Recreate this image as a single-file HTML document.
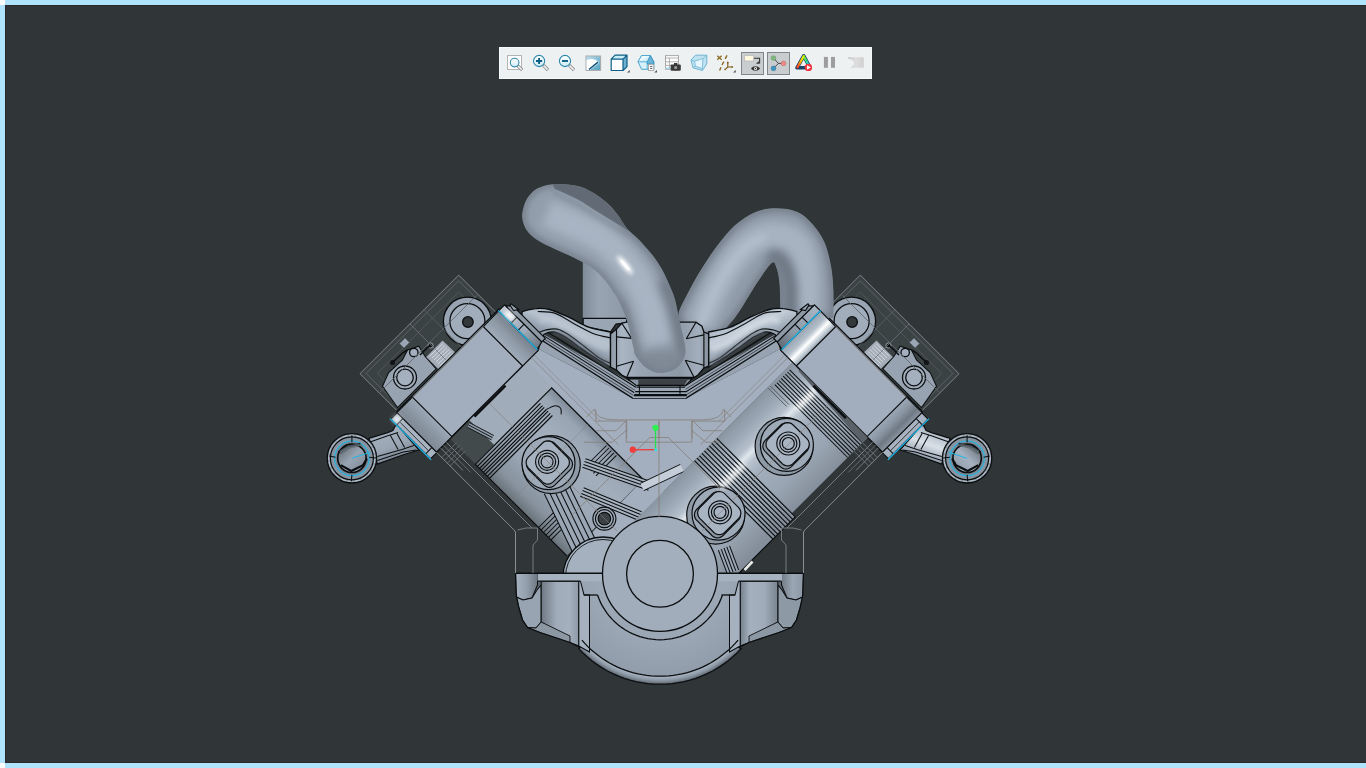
<!DOCTYPE html>
<html lang="en"><head><meta charset="utf-8"><title>Engine assembly - 3D model view</title>
<style>
html,body{margin:0;padding:0;background:#fff;overflow:hidden;font-family:"Liberation Sans",sans-serif}
#app{position:absolute;left:0;top:0;width:1366px;height:768px;background:#fff;overflow:hidden}
#frameT{position:absolute;left:5px;top:0;width:1361px;height:5px;background:#b0e4fe}
#frameB{position:absolute;left:5px;top:763px;width:1361px;height:5px;background:#b0e4fe}
#frameL{position:absolute;left:0;top:5px;width:5px;height:758px;background:#b0e4fe}
#view{position:absolute;left:5px;top:5px;width:1361px;height:758px;background:#303637;box-shadow:inset 1px 1px 0 #272a2a, inset 0 -1px 0 #272a2a}
#scene{position:absolute;left:0;top:0}
#tb{position:absolute;left:499px;top:47px;width:371px;height:30px;background:#eef1f2;border:1px solid #f6f8f9}
.sel{position:absolute;top:52px;width:21px;height:21px;background:#c9cdd0;border:1px solid #80868a}
</style></head><body>
<div id="app">
<div id="frameT"></div><div id="frameB"></div><div id="frameL"></div>
<div id="view"></div>

<svg id="scene" width="1366" height="768" viewBox="0 0 1366 768">
<defs>
<filter id="b06" filterUnits="userSpaceOnUse" x="300" y="150" width="720" height="560"><feGaussianBlur stdDeviation="0.6"/></filter>
<filter id="b2" filterUnits="userSpaceOnUse" x="300" y="150" width="720" height="560"><feGaussianBlur stdDeviation="2"/></filter>
<filter id="b3" filterUnits="userSpaceOnUse" x="300" y="150" width="720" height="560"><feGaussianBlur stdDeviation="3.2"/></filter>
<filter id="b5" filterUnits="userSpaceOnUse" x="300" y="150" width="720" height="560"><feGaussianBlur stdDeviation="5"/></filter>
</defs>
<polygon points="582.8,258.0 582.8,319.0 626.0,319.0 626.0,280.0 600.0,262.0" fill="url(#gBack)"/>
<defs>
<linearGradient id="gBack" x1="582" y1="0" x2="630" y2="0" gradientUnits="userSpaceOnUse">
<stop offset="0" stop-color="#7f8a97"/><stop offset="0.35" stop-color="#98a4b2"/><stop offset="1" stop-color="#8d98a6"/></linearGradient>
</defs>
<defs>
<linearGradient id="gPistL" x1="0" y1="0" x2="1" y2="0" gradientUnits="objectBoundingBox" gradientTransform="rotate(45 .5 .5)">
<stop offset="0" stop-color="#6f7984"/><stop offset="0.25" stop-color="#99a5b3"/><stop offset="0.6" stop-color="#a3afbd"/><stop offset="1" stop-color="#7b8591"/></linearGradient>
</defs>
<polygon points="397.5,411.2 360.0,373.7 458.7,275.1 496.2,312.6" fill="#3b4243" stroke="#7d858a" stroke-width="1"/>
<polygon points="400.7,408.0 366.1,373.4 458.7,280.8 493.3,315.4" fill="none" stroke="#5b6367" stroke-width="1"/>
<polygon points="406.4,402.4 377.4,373.4 458.7,292.1 487.7,321.1" fill="none" stroke="#4f575a" stroke-width="1"/>
<circle cx="467.4" cy="321.2" r="24" fill="#98a4b2" stroke="#0b0e10" stroke-width="1.30"/>
<circle cx="467.4" cy="321.2" r="17.5" fill="#a1adbb" stroke="#0b0e10" stroke-width="1.30"/>
<circle cx="467.9" cy="322.0" r="5.3" fill="#33383b" stroke="#0b0e10" stroke-width="1.30"/>
<polygon points="382.5,386.2 388.7,372.5 402.5,360.0 407.5,350.0 418.8,346.2 425.0,356.2 436.2,368.8 397.5,407.5" fill="#97a3b1" stroke="#0b0e10" stroke-width="1.04"/>
<polygon points="399.5,343.7 405.0,338.0 409.5,342.5 404.0,348.0" fill="#9aa6b4" stroke="#555c62" stroke-width="0.8"/>
<circle cx="405.0" cy="377.5" r="11.5" fill="#a0acba" stroke="#0b0e10" stroke-width="1.30"/>
<circle cx="405.0" cy="377.5" r="8.3" fill="#a4b0be" stroke="#0b0e10" stroke-width="1.30"/>
<circle cx="413.8" cy="352.5" r="4.2" fill="#a4b0be" stroke="#0b0e10" stroke-width="1.30"/>
<circle cx="392.5" cy="362.5" r="2.6" fill="#15181a"/>
<circle cx="430.5" cy="345.5" r="2.6" fill="#15181a" stroke="#9aa6b4" stroke-width="1"/>
<polyline points="392.5,362.5 402.5,353.0 407.5,350.0" fill="none" stroke="#0b0e10" stroke-width="1.56"/>
<polyline points="420.0,355.0 427.5,347.5 430.5,345.5" fill="none" stroke="#0b0e10" stroke-width="1.56"/>
<polygon points="426.2,357.0 442.5,340.5 458.0,355.0 440.5,371.2" fill="#a3acb7" stroke="none"/>
<line x1="430.0" y1="356.0" x2="443.0" y2="343.5" stroke="#d5dbe1" stroke-width="1"/>
<line x1="432.0" y1="358.0" x2="445.0" y2="345.5" stroke="#d5dbe1" stroke-width="1"/>
<line x1="434.0" y1="360.0" x2="447.0" y2="347.5" stroke="#d5dbe1" stroke-width="1"/>
<line x1="436.0" y1="362.0" x2="449.0" y2="349.5" stroke="#d5dbe1" stroke-width="1"/>
<line x1="438.0" y1="364.0" x2="451.0" y2="351.5" stroke="#d5dbe1" stroke-width="1"/>
<line x1="440.0" y1="366.0" x2="453.0" y2="353.5" stroke="#d5dbe1" stroke-width="1"/>
<line x1="442.0" y1="368.0" x2="455.0" y2="355.5" stroke="#d5dbe1" stroke-width="1"/>
<polygon points="437.1,451.5 396.8,411.2 499.0,309.0 539.3,349.3" fill="#a2aebd" stroke="#0b0e10" stroke-width="1.30"/>
<polygon points="921.5,411.2 959.0,373.7 860.3,275.1 822.8,312.6" fill="#3b4243" stroke="#7d858a" stroke-width="1"/>
<polygon points="918.3,408.0 952.9,373.4 860.3,280.8 825.7,315.4" fill="none" stroke="#5b6367" stroke-width="1"/>
<polygon points="912.6,402.4 941.6,373.4 860.3,292.1 831.3,321.1" fill="none" stroke="#4f575a" stroke-width="1"/>
<circle cx="851.6" cy="321.2" r="24" fill="#98a4b2" stroke="#0b0e10" stroke-width="1.30"/>
<circle cx="851.6" cy="321.2" r="17.5" fill="#a1adbb" stroke="#0b0e10" stroke-width="1.30"/>
<circle cx="852.1" cy="322.0" r="5.3" fill="#33383b" stroke="#0b0e10" stroke-width="1.30"/>
<polygon points="936.5,386.2 930.2,372.5 916.5,360.0 911.5,350.0 900.2,346.2 894.0,356.2 882.8,368.8 921.5,407.5" fill="#97a3b1" stroke="#0b0e10" stroke-width="1.04"/>
<polygon points="919.5,343.7 914.0,338.0 909.5,342.5 915.0,348.0" fill="#9aa6b4" stroke="#555c62" stroke-width="0.8"/>
<circle cx="914.0" cy="377.5" r="11.5" fill="#a0acba" stroke="#0b0e10" stroke-width="1.30"/>
<circle cx="914.0" cy="377.5" r="8.3" fill="#a4b0be" stroke="#0b0e10" stroke-width="1.30"/>
<circle cx="905.2" cy="352.5" r="4.2" fill="#a4b0be" stroke="#0b0e10" stroke-width="1.30"/>
<circle cx="926.5" cy="362.5" r="2.6" fill="#15181a"/>
<circle cx="888.5" cy="345.5" r="2.6" fill="#15181a" stroke="#9aa6b4" stroke-width="1"/>
<polyline points="926.5,362.5 916.5,353.0 911.5,350.0" fill="none" stroke="#0b0e10" stroke-width="1.56"/>
<polyline points="899.0,355.0 891.5,347.5 888.5,345.5" fill="none" stroke="#0b0e10" stroke-width="1.56"/>
<polygon points="892.8,357.0 876.5,340.5 861.0,355.0 878.5,371.2" fill="#a3acb7" stroke="none"/>
<line x1="889.0" y1="356.0" x2="876.0" y2="343.5" stroke="#d5dbe1" stroke-width="1"/>
<line x1="887.0" y1="358.0" x2="874.0" y2="345.5" stroke="#d5dbe1" stroke-width="1"/>
<line x1="885.0" y1="360.0" x2="872.0" y2="347.5" stroke="#d5dbe1" stroke-width="1"/>
<line x1="883.0" y1="362.0" x2="870.0" y2="349.5" stroke="#d5dbe1" stroke-width="1"/>
<line x1="881.0" y1="364.0" x2="868.0" y2="351.5" stroke="#d5dbe1" stroke-width="1"/>
<line x1="879.0" y1="366.0" x2="866.0" y2="353.5" stroke="#d5dbe1" stroke-width="1"/>
<line x1="877.0" y1="368.0" x2="864.0" y2="355.5" stroke="#d5dbe1" stroke-width="1"/>
<polygon points="881.9,451.5 922.2,411.2 820.0,309.0 779.7,349.3" fill="#a2aebd" stroke="#0b0e10" stroke-width="1.30"/>
<defs>
<linearGradient id="gPL" gradientUnits="userSpaceOnUse" x1="516.0" y1="504.9" x2="592.3" y2="428.5">
<stop offset="0" stop-color="#687279"/><stop offset="0.12" stop-color="#87929e"/><stop offset="0.35" stop-color="#9ba7b5"/><stop offset="0.7" stop-color="#a2aebc"/><stop offset="0.9" stop-color="#99a5b3"/><stop offset="1" stop-color="#808b98"/></linearGradient>
<linearGradient id="gPR" gradientUnits="userSpaceOnUse" x1="801.6" y1="503.5" x2="726.7" y2="428.5">
<stop offset="0" stop-color="#858f9b"/><stop offset="0.25" stop-color="#99a5b2"/><stop offset="0.5" stop-color="#a2aebc"/><stop offset="0.62" stop-color="#b9c4cf"/><stop offset="0.68" stop-color="#dfe6ec"/><stop offset="0.74" stop-color="#b4bfcb"/><stop offset="0.85" stop-color="#9faab8"/><stop offset="1" stop-color="#8a95a2"/></linearGradient>
</defs>
<polygon points="539.3,349.3 632.6,398.0 686.3,398.0 779.7,349.3 792.8,362.4 663.0,492.2 720.0,573.0 600.0,573.0 576.0,549.0 643.2,479.5 526.2,362.4" fill="#a3afbe"/>
<polygon points="475.7,464.6 449.5,438.4 468.6,419.4 494.7,445.5" fill="#434a4c"/>
<polygon points="494.7,445.5 468.6,419.4 526.6,361.4 552.7,387.5" fill="#a0acba"/>
<polygon points="566.9,555.8 474.9,463.9 551.3,387.5 643.2,479.5" fill="url(#gPL)"/>
<polygon points="709.7,595.4 868.1,437.0 793.1,362.1 634.8,520.5" fill="url(#gPR)"/>
<line x1="475.3" y1="464.3" x2="551.7" y2="387.9" stroke="#0b0e10" stroke-width="1.17"/>
<line x1="477.4" y1="466.4" x2="540.4" y2="403.4" stroke="#0b0e10" stroke-width="1.17"/>
<line x1="479.5" y1="468.5" x2="542.5" y2="405.6" stroke="#0b0e10" stroke-width="1.17"/>
<line x1="481.3" y1="470.3" x2="544.2" y2="407.3" stroke="#0b0e10" stroke-width="1.17"/>
<line x1="483.4" y1="472.4" x2="546.4" y2="409.5" stroke="#0b0e10" stroke-width="1.17"/>
<line x1="485.2" y1="474.2" x2="548.1" y2="411.2" stroke="#0b0e10" stroke-width="1.17"/>
<line x1="487.3" y1="476.3" x2="550.3" y2="413.3" stroke="#0b0e10" stroke-width="1.17"/>
<line x1="489.4" y1="478.4" x2="552.4" y2="415.5" stroke="#0b0e10" stroke-width="1.17"/>
<path d="M546.4,409.5 C547.7,408.9 551.8,406.2 554.1,405.9 C556.5,405.7 559.3,406.6 560.5,408.0 C561.7,409.5 561.1,413.3 561.2,414.4" fill="none" stroke="#0b0e10" stroke-width="1.04"/>
<line x1="566.9" y1="555.8" x2="474.9" y2="463.9" stroke="#0b0e10" stroke-width="1.17"/>
<line x1="643.2" y1="479.5" x2="551.3" y2="387.5" stroke="#0b0e10" stroke-width="1.17"/>
<line x1="538.6" y1="527.5" x2="560.5" y2="505.6" stroke="#0b0e10" stroke-width="1.04"/>
<line x1="541.1" y1="530.0" x2="563.0" y2="508.1" stroke="#0b0e10" stroke-width="1.04"/>
<line x1="543.5" y1="532.5" x2="565.5" y2="510.6" stroke="#0b0e10" stroke-width="1.04"/>
<line x1="546.0" y1="535.0" x2="567.9" y2="513.0" stroke="#0b0e10" stroke-width="1.04"/>
<line x1="548.5" y1="537.4" x2="570.4" y2="515.5" stroke="#0b0e10" stroke-width="1.04"/>
<line x1="551.0" y1="539.9" x2="572.9" y2="518.0" stroke="#0b0e10" stroke-width="1.04"/>
<line x1="586.0" y1="466.0" x2="606.5" y2="445.5" stroke="#0b0e10" stroke-width="1.04"/>
<line x1="588.4" y1="468.5" x2="608.9" y2="448.0" stroke="#0b0e10" stroke-width="1.04"/>
<line x1="590.9" y1="471.0" x2="611.4" y2="450.5" stroke="#0b0e10" stroke-width="1.04"/>
<line x1="593.4" y1="473.4" x2="613.9" y2="452.9" stroke="#0b0e10" stroke-width="1.04"/>
<line x1="595.9" y1="475.9" x2="616.4" y2="455.4" stroke="#0b0e10" stroke-width="1.04"/>
<polygon points="544.3,493.7 572.3,551.7 595.7,540.3 567.7,482.3" fill="#9aa6b4"/>
<line x1="567.7" y1="482.3" x2="595.7" y2="540.3" stroke="#0b0e10" stroke-width="1.04"/>
<line x1="544.3" y1="493.7" x2="572.3" y2="551.7" stroke="#0b0e10" stroke-width="1.04"/>
<line x1="563.0" y1="484.6" x2="591.0" y2="542.6" stroke="#0b0e10" stroke-width="1.04"/>
<line x1="558.3" y1="486.9" x2="586.3" y2="544.9" stroke="#0b0e10" stroke-width="1.04"/>
<line x1="553.7" y1="489.1" x2="581.7" y2="547.1" stroke="#0b0e10" stroke-width="1.04"/>
<line x1="549.0" y1="491.4" x2="577.0" y2="549.4" stroke="#0b0e10" stroke-width="1.04"/>
<polygon points="582.5,467.2 648.5,490.2 651.5,481.8 585.5,458.8" fill="#a7b3c1"/>
<line x1="585.5" y1="458.8" x2="651.5" y2="481.8" stroke="#0b0e10" stroke-width="1.04"/>
<line x1="582.5" y1="467.2" x2="648.5" y2="490.2" stroke="#0b0e10" stroke-width="1.04"/>
<line x1="584.5" y1="461.6" x2="650.5" y2="484.6" stroke="#0b0e10" stroke-width="1.04"/>
<line x1="583.5" y1="464.4" x2="649.5" y2="487.4" stroke="#0b0e10" stroke-width="1.04"/>
<polygon points="580.3,496.2 638.3,520.2 641.7,511.8 583.7,487.8" fill="#a7b3c1"/>
<line x1="583.7" y1="487.8" x2="641.7" y2="511.8" stroke="#0b0e10" stroke-width="1.04"/>
<line x1="580.3" y1="496.2" x2="638.3" y2="520.2" stroke="#0b0e10" stroke-width="1.04"/>
<line x1="582.6" y1="490.6" x2="640.6" y2="514.6" stroke="#0b0e10" stroke-width="1.04"/>
<line x1="581.4" y1="493.4" x2="639.4" y2="517.4" stroke="#0b0e10" stroke-width="1.04"/>
<circle cx="604.4" cy="518.7" r="11.5" fill="#9da9b7" stroke="#0b0e10" stroke-width="1.17"/>
<circle cx="604.4" cy="518.7" r="9" fill="#a3afbd" stroke="#0b0e10" stroke-width="1.17"/>
<circle cx="604.4" cy="518.7" r="6.3" fill="#3a4043" stroke="#0b0e10" stroke-width="1.17"/>
<polygon points="643.7,490.6 683.7,471.6 680.3,464.4 640.3,483.4" fill="#c5ced8"/>
<line x1="640.3" y1="483.4" x2="680.3" y2="464.4" stroke="#0b0e10" stroke-width="1.04"/>
<line x1="643.7" y1="490.6" x2="683.7" y2="471.6" stroke="#0b0e10" stroke-width="1.04"/>
<circle cx="551.3" cy="464.6" r="29" fill="#8f9aa7" stroke="#0b0e10" stroke-width="1.17"/>
<circle cx="548.5" cy="463.2" r="26.5" fill="#9da9b7" stroke="#0b0e10" stroke-width="1.17"/>
<polygon points="544.2,443.4 545.8,442.2 547.6,441.5 549.5,441.2 551.5,441.5 553.3,442.2 554.8,443.4 570.4,458.9 571.6,460.5 572.3,462.3 572.6,464.3 572.3,466.2 571.6,468.0 570.4,469.6 554.8,485.1 553.3,486.3 551.5,487.1 549.5,487.3 547.6,487.1 545.8,486.3 544.2,485.1 528.7,469.6 527.5,468.0 526.7,466.2 526.5,464.3 526.7,462.3 527.5,460.5 528.7,458.9" fill="#8a95a2" stroke="#0b0e10" stroke-width="1.17"/>
<polygon points="542.5,443.0 544.0,441.8 545.8,441.1 547.8,440.8 549.7,441.1 551.5,441.8 553.1,443.0 567.2,457.2 568.4,458.7 569.2,460.5 569.4,462.5 569.2,464.4 568.4,466.2 567.2,467.8 553.1,481.9 551.5,483.1 549.7,483.9 547.8,484.1 545.8,483.9 544.0,483.1 542.5,481.9 528.3,467.8 527.1,466.2 526.4,464.4 526.1,462.5 526.4,460.5 527.1,458.7 528.3,457.2" fill="#a6b2c0" stroke="#0b0e10" stroke-width="1.17"/>
<circle cx="547.1" cy="461.8" r="11.5" fill="#a6b2c0" stroke="#0b0e10" stroke-width="1.17"/>
<circle cx="547.1" cy="461.8" r="8.6" fill="#a6b2c0" stroke="#0b0e10" stroke-width="1.17"/>
<circle cx="547.1" cy="461.8" r="6" fill="#a6b2c0" stroke="#0b0e10" stroke-width="1.17"/>
<polygon points="467.4,427.2 491.5,439.9 493.8,435.5 469.8,422.8" fill="#8d98a5"/>
<line x1="469.8" y1="422.8" x2="493.8" y2="435.5" stroke="#0b0e10" stroke-width="0.91"/>
<line x1="467.4" y1="427.2" x2="491.5" y2="439.9" stroke="#0b0e10" stroke-width="0.91"/>
<line x1="468.6" y1="425.0" x2="492.6" y2="437.7" stroke="#0b0e10" stroke-width="0.91"/>
<line x1="862.4" y1="442.7" x2="789.6" y2="369.9" stroke="#0b0e10" stroke-width="1.04"/>
<line x1="860.3" y1="444.8" x2="787.5" y2="372.0" stroke="#0b0e10" stroke-width="1.04"/>
<line x1="858.2" y1="446.9" x2="785.4" y2="374.1" stroke="#0b0e10" stroke-width="1.04"/>
<line x1="856.1" y1="449.0" x2="783.2" y2="376.2" stroke="#0b0e10" stroke-width="1.04"/>
<line x1="854.0" y1="451.2" x2="781.1" y2="378.3" stroke="#0b0e10" stroke-width="1.04"/>
<line x1="851.8" y1="453.3" x2="779.0" y2="380.5" stroke="#0b0e10" stroke-width="1.04"/>
<line x1="849.7" y1="455.4" x2="776.9" y2="382.6" stroke="#0b0e10" stroke-width="1.04"/>
<line x1="847.6" y1="457.5" x2="774.8" y2="384.7" stroke="#0b0e10" stroke-width="1.04"/>
<line x1="788.9" y1="404.5" x2="770.5" y2="386.1" stroke="#3c4247" stroke-width="0.8"/>
<line x1="786.8" y1="406.6" x2="768.4" y2="388.2" stroke="#3c4247" stroke-width="0.8"/>
<circle cx="784.1" cy="446.4" r="29" fill="#8f9aa7" stroke="#0b0e10" stroke-width="1.17"/>
<circle cx="786.9" cy="444.9" r="26.5" fill="#9da9b7" stroke="#0b0e10" stroke-width="1.17"/>
<polygon points="791.2,425.1 789.6,424.0 787.8,423.2 785.9,423.0 783.9,423.2 782.1,424.0 780.6,425.1 765.0,440.7 763.8,442.3 763.1,444.1 762.8,446.0 763.1,447.9 763.8,449.8 765.0,451.3 780.6,466.9 782.1,468.1 783.9,468.8 785.9,469.1 787.8,468.8 789.6,468.1 791.2,466.9 806.7,451.3 807.9,449.8 808.7,447.9 808.9,446.0 808.7,444.1 807.9,442.3 806.7,440.7" fill="#8a95a2" stroke="#0b0e10" stroke-width="1.17"/>
<polygon points="792.9,424.8 791.4,423.6 789.6,422.9 787.6,422.6 785.7,422.9 783.9,423.6 782.3,424.8 768.2,438.9 767.0,440.5 766.2,442.3 766.0,444.2 766.2,446.2 767.0,448.0 768.2,449.5 782.3,463.7 783.9,464.9 785.7,465.6 787.6,465.9 789.6,465.6 791.4,464.9 792.9,463.7 807.1,449.5 808.3,448.0 809.0,446.2 809.3,444.2 809.0,442.3 808.3,440.5 807.1,438.9" fill="#a8b4c2" stroke="#0b0e10" stroke-width="1.17"/>
<circle cx="788.3" cy="443.5" r="11.5" fill="#a8b4c2" stroke="#0b0e10" stroke-width="1.17"/>
<circle cx="788.3" cy="443.5" r="8.6" fill="#a8b4c2" stroke="#0b0e10" stroke-width="1.17"/>
<circle cx="788.3" cy="443.5" r="6" fill="#a8b4c2" stroke="#0b0e10" stroke-width="1.17"/>
<polygon points="713.2,599.0 795.3,516.9 716.8,438.4 634.8,520.5" fill="url(#gPR)"/>
<line x1="795.3" y1="516.9" x2="716.8" y2="438.4" stroke="#0b0e10" stroke-width="1.17"/>
<line x1="792.8" y1="519.4" x2="714.3" y2="440.9" stroke="#0b0e10" stroke-width="1.17"/>
<line x1="790.3" y1="521.9" x2="711.8" y2="443.4" stroke="#0b0e10" stroke-width="1.17"/>
<line x1="787.8" y1="524.4" x2="709.4" y2="445.9" stroke="#0b0e10" stroke-width="1.17"/>
<line x1="785.4" y1="526.8" x2="706.9" y2="448.3" stroke="#0b0e10" stroke-width="1.17"/>
<line x1="782.9" y1="529.3" x2="704.4" y2="450.8" stroke="#0b0e10" stroke-width="1.17"/>
<line x1="780.4" y1="531.8" x2="701.9" y2="453.3" stroke="#0b0e10" stroke-width="1.17"/>
<line x1="777.9" y1="534.3" x2="699.5" y2="455.8" stroke="#0b0e10" stroke-width="1.17"/>
<line x1="775.5" y1="536.7" x2="697.0" y2="458.2" stroke="#0b0e10" stroke-width="1.17"/>
<line x1="773.0" y1="539.2" x2="694.5" y2="460.7" stroke="#0b0e10" stroke-width="1.17"/>
<line x1="713.2" y1="599.0" x2="795.3" y2="516.9" stroke="#0b0e10" stroke-width="1.17"/>
<circle cx="715.7" cy="515.2" r="29" fill="#8f9aa7" stroke="#0b0e10" stroke-width="1.17"/>
<circle cx="718.5" cy="513.7" r="26.5" fill="#9da9b7" stroke="#0b0e10" stroke-width="1.17"/>
<polygon points="722.8,494.0 721.2,492.8 719.4,492.0 717.5,491.8 715.5,492.0 713.7,492.8 712.2,494.0 696.6,509.5 695.4,511.1 694.7,512.9 694.4,514.8 694.7,516.8 695.4,518.6 696.6,520.1 712.2,535.7 713.7,536.9 715.5,537.6 717.5,537.9 719.4,537.6 721.2,536.9 722.8,535.7 738.3,520.1 739.5,518.6 740.3,516.8 740.5,514.8 740.3,512.9 739.5,511.1 738.3,509.5" fill="#8a95a2" stroke="#0b0e10" stroke-width="1.17"/>
<polygon points="724.6,493.6 723.0,492.4 721.2,491.7 719.3,491.4 717.3,491.7 715.5,492.4 713.9,493.6 699.8,507.7 698.6,509.3 697.9,511.1 697.6,513.0 697.9,515.0 698.6,516.8 699.8,518.3 713.9,532.5 715.5,533.7 717.3,534.4 719.3,534.7 721.2,534.4 723.0,533.7 724.6,532.5 738.7,518.3 739.9,516.8 740.6,515.0 740.9,513.0 740.6,511.1 739.9,509.3 738.7,507.7" fill="#a8b4c2" stroke="#0b0e10" stroke-width="1.17"/>
<circle cx="720.0" cy="512.3" r="11.5" fill="#a8b4c2" stroke="#0b0e10" stroke-width="1.17"/>
<circle cx="720.0" cy="512.3" r="8.6" fill="#a8b4c2" stroke="#0b0e10" stroke-width="1.17"/>
<circle cx="720.0" cy="512.3" r="6" fill="#a8b4c2" stroke="#0b0e10" stroke-width="1.17"/>
<line x1="797.4" y1="408.7" x2="813.6" y2="392.5" stroke="#ffffff" stroke-width="5" filter="url(#b2)" opacity="0.85"/>
<line x1="720.3" y1="488.6" x2="744.4" y2="464.6" stroke="#ffffff" stroke-width="5" filter="url(#b2)" opacity="0.8"/>
<line x1="744.5" y1="570.0" x2="752.5" y2="561.5" stroke="#ffffff" stroke-width="2.6" filter="url(#b06)" opacity="0.9"/>
<polygon points="718.4,550.1 727.4,574.1 738.6,569.9 729.6,545.9" fill="#9aa6b4"/>
<line x1="729.6" y1="545.9" x2="738.6" y2="569.9" stroke="#0b0e10" stroke-width="1.04"/>
<line x1="718.4" y1="550.1" x2="727.4" y2="574.1" stroke="#0b0e10" stroke-width="1.04"/>
<line x1="726.8" y1="546.9" x2="735.8" y2="570.9" stroke="#0b0e10" stroke-width="1.04"/>
<line x1="724.0" y1="548.0" x2="733.0" y2="572.0" stroke="#0b0e10" stroke-width="1.04"/>
<line x1="721.2" y1="549.1" x2="730.2" y2="573.1" stroke="#0b0e10" stroke-width="1.04"/>
<circle cx="603.0" cy="577.0" r="40" fill="#a5b1bf" stroke="#0b0e10" stroke-width="1.30"/>
<circle cx="603.0" cy="577.0" r="37.5" fill="none" stroke="#0b0e10" stroke-width="0.91"/>
<circle cx="660.0" cy="573.8" r="57.5" fill="#a1adbb" stroke="#0b0e10" stroke-width="1.30"/>
<circle cx="660.0" cy="573.8" r="33.4" fill="#a3afbd" stroke="#0b0e10" stroke-width="1.30"/>
<defs>
<radialGradient id="gCC" gradientUnits="userSpaceOnUse" cx="660" cy="573.75" r="110.5">
<stop offset="0" stop-color="#9ca8b6"/><stop offset="0.6" stop-color="#9ba7b5"/><stop offset="0.925" stop-color="#929dab"/><stop offset="0.935" stop-color="#a6b2c0"/><stop offset="0.965" stop-color="#8c97a4"/><stop offset="1" stop-color="#5d666f"/></radialGradient>
<linearGradient id="gLug" x1="0" y1="0" x2="1" y2="0"><stop offset="0" stop-color="#a7b3c1"/><stop offset="0.5" stop-color="#939fac"/><stop offset="1" stop-color="#6e7883"/></linearGradient>
<linearGradient id="gLugR" x1="1" y1="0" x2="0" y2="0"><stop offset="0" stop-color="#8d98a5"/><stop offset="0.5" stop-color="#9aa6b4"/><stop offset="1" stop-color="#727c87"/></linearGradient>
<linearGradient id="gPock" x1="0" y1="0" x2="1" y2="0"><stop offset="0" stop-color="#6e7883"/><stop offset="0.4" stop-color="#9fabb9"/><stop offset="0.75" stop-color="#a4b0be"/><stop offset="1" stop-color="#8e99a6"/></linearGradient>
<linearGradient id="gPockR" x1="1" y1="0" x2="0" y2="0"><stop offset="0" stop-color="#7a8490"/><stop offset="0.35" stop-color="#9fabb9"/><stop offset="0.75" stop-color="#a4b0be"/><stop offset="1" stop-color="#76808c"/></linearGradient>
</defs>
<clipPath id="cCC"><polygon points="515.5,573.2 516.2,595.0 518.8,607.5 522.5,620.0 527.5,627.5 540.0,632.5 570.0,642.5 580.0,647.5 578.8,648.6 583.0,653.0 587.5,657.1 592.2,661.0 597.1,664.6 602.2,667.9 607.4,671.0 612.9,673.7 618.5,676.1 624.2,678.3 630.0,680.1 635.9,681.6 641.8,682.7 647.9,683.6 653.9,684.1 660.0,684.2 666.1,684.1 672.1,683.6 678.2,682.7 684.1,681.6 690.0,680.1 695.8,678.3 701.5,676.1 707.1,673.7 712.6,671.0 717.8,667.9 722.9,664.6 727.8,661.0 732.5,657.1 737.0,653.0 741.2,648.6 739.0,647.5 749.0,642.5 779.0,632.5 791.5,627.5 796.5,620.0 800.2,607.5 802.8,595.0 803.5,573.2" /></clipPath>
<polygon points="515.5,573.2 516.2,595.0 518.8,607.5 522.5,620.0 527.5,627.5 540.0,632.5 570.0,642.5 580.0,647.5 578.8,648.6 583.0,653.0 587.5,657.1 592.2,661.0 597.1,664.6 602.2,667.9 607.4,671.0 612.9,673.7 618.5,676.1 624.2,678.3 630.0,680.1 635.9,681.6 641.8,682.7 647.9,683.6 653.9,684.1 660.0,684.2 666.1,684.1 672.1,683.6 678.2,682.7 684.1,681.6 690.0,680.1 695.8,678.3 701.5,676.1 707.1,673.7 712.6,671.0 717.8,667.9 722.9,664.6 727.8,661.0 732.5,657.1 737.0,653.0 741.2,648.6 739.0,647.5 749.0,642.5 779.0,632.5 791.5,627.5 796.5,620.0 800.2,607.5 802.8,595.0 803.5,573.2" fill="url(#gCC)"/>
<g clip-path="url(#cCC)">
<polygon points="515.5,573.2 537.5,573.2 537.5,585.0 532.0,598.0 523.0,600.0 516.2,597.0" fill="url(#gLug)" stroke="#0b0e10" stroke-width="1.04"/>
<polygon points="803.5,573.2 781.5,573.2 781.5,585.0 787.0,598.0 796.0,600.0 802.8,597.0" fill="url(#gLugR)" stroke="#0b0e10" stroke-width="1.04"/>
<polygon points="516.2,597.0 523.0,600.0 532.0,598.0 537.0,590.0 541.2,585.0 541.2,622.0 536.0,628.0 527.5,627.5 522.5,620.0 518.8,607.5" fill="#98a4b2" stroke="#0b0e10" stroke-width="1.04"/>
<polygon points="802.8,597.0 796.0,600.0 787.0,598.0 782.0,590.0 777.8,585.0 777.8,622.0 783.0,628.0 791.5,627.5 796.5,620.0 800.2,607.5" fill="#8e99a6" stroke="#0b0e10" stroke-width="1.04"/>
<polygon points="541.2,581.2 578.8,581.2 578.8,646.0 570.0,642.5 541.2,622.0" fill="url(#gPock)" stroke="#0b0e10" stroke-width="1.04"/>
<polygon points="777.8,581.2 740.2,581.2 740.2,646.0 749.0,642.5 777.8,622.0" fill="url(#gPockR)" stroke="#0b0e10" stroke-width="1.04"/>
<polygon points="541.2,622.0 570.0,636.0 570.0,642.5 540.0,632.5 527.5,627.5 536.0,628.0" fill="#8c97a4" stroke="#0b0e10" stroke-width="0.91"/>
<polygon points="777.8,622.0 749.0,636.0 749.0,642.5 779.0,632.5 791.5,627.5 783.0,628.0" fill="#8c97a4" stroke="#0b0e10" stroke-width="0.91"/>
<polygon points="578.8,581.2 580.5,581.2 584.0,595.0 589.5,595.0 589.5,652.0 578.8,646.0" fill="#a5b1bf" stroke="#0b0e10" stroke-width="1.04"/>
<polygon points="740.2,581.2 738.5,581.2 735.0,595.0 729.5,595.0 729.5,652.0 740.2,646.0" fill="#a5b1bf" stroke="#0b0e10" stroke-width="1.04"/>
</g>
<rect x="537.5" y="573.25" width="244.5" height="8" fill="#a6b2c0"/>
<line x1="537.5" y1="581.2" x2="580.5" y2="581.2" stroke="#0b0e10" stroke-width="1.30"/>
<line x1="781.5" y1="581.2" x2="738.5" y2="581.2" stroke="#0b0e10" stroke-width="1.30"/>
<polyline points="584.0,595.0 597.5,595.0" fill="none" stroke="#0b0e10" stroke-width="1.30"/>
<polyline points="735.0,595.0 721.5,595.0" fill="none" stroke="#0b0e10" stroke-width="1.30"/>
<polyline points="597.5,595.0 599.0,598.8 600.6,602.6 602.5,606.2 604.7,609.7 607.0,613.1 609.5,616.3 612.3,619.4 615.2,622.2 618.3,624.9 621.6,627.4 625.0,629.7 628.5,631.8 632.2,633.6 636.0,635.2 639.8,636.6 643.8,637.7 647.8,638.6 651.8,639.2 655.9,639.6 660.0,639.8 664.1,639.6 668.2,639.2 672.2,638.6 676.2,637.7 680.2,636.6 684.0,635.2 687.8,633.6 691.5,631.8 695.0,629.7 698.4,627.4 701.7,624.9 704.8,622.2 707.7,619.4 710.5,616.3 713.0,613.1 715.3,609.7 717.5,606.2 719.4,602.6 721.0,598.8 722.5,595.0" fill="none" stroke="#0b0e10" stroke-width="1.30"/>
<polyline points="581.9,640.1 584.8,643.4 587.9,646.6 591.1,649.7 594.5,652.6 598.0,655.3 601.6,658.0 605.3,660.4 609.1,662.7 613.0,664.8 617.0,666.8 621.0,668.6 625.2,670.2 629.4,671.6 633.6,672.8 638.0,673.9 642.3,674.7 646.7,675.4 651.1,675.9 655.6,676.2 660.0,676.2 664.4,676.2 668.9,675.9 673.3,675.4 677.7,674.7 682.0,673.9 686.4,672.8 690.6,671.6 694.8,670.2 699.0,668.6 703.0,666.8 707.0,664.8 710.9,662.7 714.7,660.4 718.4,658.0 722.0,655.3 725.5,652.6 728.9,649.7 732.1,646.6 735.2,643.4 738.1,640.1" fill="none" stroke="#0b0e10" stroke-width="1.30"/>
<clipPath id="cLow"><rect x="590" y="573" width="140" height="80"/></clipPath>
<g clip-path="url(#cLow)">
<circle cx="660.0" cy="573.8" r="57.5" fill="#a1adbb" stroke="#0b0e10" stroke-width="1.30"/>
<circle cx="660.0" cy="573.8" r="33.4" fill="#a3afbd" stroke="#0b0e10" stroke-width="1.30"/>
</g>
<polyline points="515.5,573.2 516.2,595.0 518.8,607.5 522.5,620.0 527.5,627.5 540.0,632.5 570.0,642.5 580.0,647.5 578.8,648.6 583.0,653.0 587.5,657.1 592.2,661.0 597.1,664.6 602.2,667.9 607.4,671.0 612.9,673.7 618.5,676.1 624.2,678.3 630.0,680.1 635.9,681.6 641.8,682.7 647.9,683.6 653.9,684.1 660.0,684.2 666.1,684.1 672.1,683.6 678.2,682.7 684.1,681.6 690.0,680.1 695.8,678.3 701.5,676.1 707.1,673.7 712.6,671.0 717.8,667.9 722.9,664.6 727.8,661.0 732.5,657.1 737.0,653.0 741.2,648.6 739.0,647.5 749.0,642.5 779.0,632.5 791.5,627.5 796.5,620.0 800.2,607.5 802.8,595.0 803.5,573.2" fill="none" stroke="#0b0e10" stroke-width="1.30"/>
<line x1="515.5" y1="573.2" x2="602.5" y2="573.2" stroke="#0b0e10" stroke-width="1.56"/>
<line x1="717.0" y1="573.2" x2="803.5" y2="573.2" stroke="#0b0e10" stroke-width="1.56"/>
<polyline points="513.8,529.7 515.5,532.0 515.5,573.0" fill="none" stroke="#8a9094" stroke-width="1"/>
<polyline points="805.2,529.7 803.5,532.0 803.5,573.0" fill="none" stroke="#8a9094" stroke-width="1"/>
<polyline points="517.5,530.0 526.0,528.0 537.5,528.0 537.5,540.0 533.0,545.0 533.0,573.0" fill="none" stroke="#757c80" stroke-width="1"/>
<polyline points="801.5,530.0 793.0,528.0 781.5,528.0 781.5,540.0 786.0,545.0 786.0,573.0" fill="none" stroke="#757c80" stroke-width="1"/>
<defs>
<linearGradient id="gArmL" gradientUnits="userSpaceOnUse" x1="560" y1="310" x2="545" y2="345">
<stop offset="0" stop-color="#a9b5c3"/><stop offset="0.35" stop-color="#b7c2ce"/><stop offset="0.6" stop-color="#97a3b1"/><stop offset="1" stop-color="#7a8490"/></linearGradient>
<linearGradient id="gArmR" gradientUnits="userSpaceOnUse" x1="759" y1="310" x2="774" y2="345">
<stop offset="0" stop-color="#aab6c4"/><stop offset="0.3" stop-color="#c3cdd8"/><stop offset="0.6" stop-color="#a3afbd"/><stop offset="1" stop-color="#7f8995"/></linearGradient>
<linearGradient id="gBlk" gradientUnits="userSpaceOnUse" x1="610" y1="0" x2="709" y2="0">
<stop offset="0" stop-color="#8b96a3"/><stop offset="0.12" stop-color="#aab6c4"/><stop offset="0.3" stop-color="#99a5b3"/><stop offset="0.7" stop-color="#8f9aa7"/><stop offset="0.9" stop-color="#a3afbd"/><stop offset="1" stop-color="#838d99"/></linearGradient>
</defs>
<polygon points="539.3,349.3 632.6,398.0 686.3,398.0 779.7,349.3 776.0,334.0 684.3,385.3 636.5,385.3 543.0,334.0" fill="#97a3b1"/>
<polyline points="541.0,339.8 632.6,398.0 686.3,398.0 778.0,339.8" fill="none" stroke="#0b0e10" stroke-width="1.30"/>
<polyline points="541.5,337.2 633.5,395.4 685.4,395.4 777.5,337.2" fill="none" stroke="#2a2f33" stroke-width="0.8"/>
<polyline points="542.0,334.6 634.4,392.8 684.5,392.8 777.0,334.6" fill="none" stroke="#0b0e10" stroke-width="1.04"/>
<polyline points="542.5,332.3 635.3,390.5 683.6,390.5 776.5,332.3" fill="none" stroke="#3a4045" stroke-width="0.8"/>
<polyline points="543.0,329.3 636.2,387.5 682.7,387.5 776.0,329.3" fill="none" stroke="#0b0e10" stroke-width="1.17"/>
<polygon points="583.1,318.3 626.7,318.3 626.7,323.0 616.0,324.0 610.5,332.0 583.1,326.1" fill="#9aa6b4" stroke="#0b0e10" stroke-width="1.30"/>
<clipPath id="cRP"><path d="M679.0,320.0 C679.0,318.5 677.4,315.8 679.2,310.8 C681.0,305.8 685.9,296.8 689.6,289.8 C693.3,282.8 697.1,276.0 701.6,268.8 C706.1,261.6 711.1,253.6 716.6,246.4 C722.1,239.2 728.1,231.2 734.6,225.4 C741.1,219.7 748.5,214.8 755.5,211.9 C762.5,209.1 769.5,208.3 776.5,208.3 C783.5,208.3 791.5,209.3 797.5,211.9 C803.5,214.5 807.9,218.9 812.4,223.9 C816.9,228.9 821.3,234.9 824.4,241.9 C827.5,248.9 829.5,257.8 831.0,265.8 C832.5,273.8 833.0,281.1 833.4,289.8 C833.8,298.5 833.4,313.3 833.4,318.0 L780.4,318.0 C780.4,316.8 780.5,316.5 780.4,310.8 C780.2,305.1 780.1,291.0 779.5,283.8 C778.9,276.6 777.8,271.3 776.5,267.8 C775.2,264.3 775.0,260.6 772.0,262.8 C769.0,265.0 763.2,273.8 758.5,280.8 C753.8,287.8 747.6,298.6 743.6,304.8 C739.6,311.0 738.5,313.2 734.6,318.2 C730.7,323.2 722.4,332.2 720.0,335.0 L690,340Z" /></clipPath>
<g clip-path="url(#cRP)">
<path d="M679.0,320.0 C679.0,318.5 677.4,315.8 679.2,310.8 C681.0,305.8 685.9,296.8 689.6,289.8 C693.3,282.8 697.1,276.0 701.6,268.8 C706.1,261.6 711.1,253.6 716.6,246.4 C722.1,239.2 728.1,231.2 734.6,225.4 C741.1,219.7 748.5,214.8 755.5,211.9 C762.5,209.1 769.5,208.3 776.5,208.3 C783.5,208.3 791.5,209.3 797.5,211.9 C803.5,214.5 807.9,218.9 812.4,223.9 C816.9,228.9 821.3,234.9 824.4,241.9 C827.5,248.9 829.5,257.8 831.0,265.8 C832.5,273.8 833.0,281.1 833.4,289.8 C833.8,298.5 833.4,313.3 833.4,318.0 L780.4,318.0 C780.4,316.8 780.5,316.5 780.4,310.8 C780.2,305.1 780.1,291.0 779.5,283.8 C778.9,276.6 777.8,271.3 776.5,267.8 C775.2,264.3 775.0,260.6 772.0,262.8 C769.0,265.0 763.2,273.8 758.5,280.8 C753.8,287.8 747.6,298.6 743.6,304.8 C739.6,311.0 738.5,313.2 734.6,318.2 C730.7,323.2 722.4,332.2 720.0,335.0 L690,340Z" fill="#909ba9"/>
<path d="M700.0,325.0 C702.0,320.3 707.5,306.2 712.0,297.0 C716.5,287.8 721.5,278.2 727.0,270.0 C732.5,261.8 738.7,253.7 745.0,248.0 C751.3,242.3 758.3,238.0 765.0,236.0 C771.7,234.0 779.2,234.2 785.0,236.0 C790.8,237.8 796.5,241.7 800.0,247.0 C803.5,252.3 804.8,260.5 806.0,268.0 C807.2,275.5 806.8,283.3 807.0,292.0 C807.2,300.7 807.0,315.3 807.0,320.0" fill="none" stroke="#a7b3c1" stroke-width="26" filter="url(#b5)"/>
<path d="M700.0,325.0 C702.0,320.3 707.5,306.2 712.0,297.0 C716.5,287.8 721.5,278.2 727.0,270.0 C732.5,261.8 738.7,253.7 745.0,248.0 C751.3,242.3 761.7,238.0 765.0,236.0" fill="none" stroke="#b4bfcc" stroke-width="7" filter="url(#b3)"/>
<path d="M768.0,256.0 C770.3,257.0 778.3,257.2 782.0,262.0 C785.7,266.8 788.7,275.3 790.0,285.0 C791.3,294.7 790.0,314.2 790.0,320.0" fill="none" stroke="#6d7783" stroke-width="14" filter="url(#b5)"/>
<path d="M679.0,320.0 C679.0,318.5 677.4,315.8 679.2,310.8 C681.0,305.8 685.9,296.8 689.6,289.8 C693.3,282.8 697.1,276.0 701.6,268.8 C706.1,261.6 711.1,253.6 716.6,246.4 C722.1,239.2 728.1,231.2 734.6,225.4 C741.1,219.7 748.5,214.8 755.5,211.9 C762.5,209.1 769.5,208.3 776.5,208.3 C783.5,208.3 791.5,209.3 797.5,211.9 C803.5,214.5 807.9,218.9 812.4,223.9 C816.9,228.9 821.3,234.9 824.4,241.9 C827.5,248.9 829.5,257.8 831.0,265.8 C832.5,273.8 833.0,281.1 833.4,289.8 C833.8,298.5 833.4,313.3 833.4,318.0 L780.4,318.0 C780.4,316.8 780.5,316.5 780.4,310.8 C780.2,305.1 780.1,291.0 779.5,283.8 C778.9,276.6 777.8,271.3 776.5,267.8 C775.2,264.3 775.0,260.6 772.0,262.8 C769.0,265.0 763.2,273.8 758.5,280.8 C753.8,287.8 747.6,298.6 743.6,304.8 C739.6,311.0 738.5,313.2 734.6,318.2 C730.7,323.2 722.4,332.2 720.0,335.0 L690,340Z" fill="none" stroke="#737d89" stroke-width="7" filter="url(#b3)"/>
</g>
<path d="M610.5,332.0 C606.8,331.2 595.5,329.6 588.6,327.1 C581.7,324.7 575.6,320.3 569.1,317.3 C562.6,314.4 555.1,311.0 549.5,309.5 C544.0,308.1 540.4,308.2 535.9,308.6 C531.3,308.9 524.5,311.0 522.2,311.5 L520.2,338.8 C521.4,339.2 524.8,340.8 527.1,341.2 C529.3,341.6 531.5,341.7 533.9,341.2 C536.3,340.6 539.9,339.1 541.7,337.9 C543.5,336.7 542.7,334.9 544.7,334.0 C546.6,333.0 550.0,331.5 553.4,332.0 C556.9,332.5 560.9,334.4 565.2,336.9 C569.4,339.3 574.0,343.2 578.8,346.7 C583.7,350.1 589.2,354.0 594.5,357.4 C599.7,360.8 607.8,365.5 610.5,367.2Z" fill="url(#gArmL)" stroke="#0b0e10" stroke-width="1.30"/>
<path d="M708.5,332.0 C712.2,331.2 723.5,329.6 730.4,327.1 C737.3,324.7 743.4,320.3 749.9,317.3 C756.4,314.4 763.9,311.0 769.5,309.5 C775.0,308.1 778.6,308.2 783.1,308.6 C787.7,308.9 794.5,311.0 796.8,311.5 L798.8,338.8 C797.6,339.2 794.2,340.8 791.9,341.2 C789.7,341.6 787.5,341.7 785.1,341.2 C782.7,340.6 779.1,339.1 777.3,337.9 C775.5,336.7 776.3,334.9 774.3,334.0 C772.4,333.0 769.0,331.5 765.6,332.0 C762.1,332.5 758.1,334.4 753.8,336.9 C749.6,339.3 745.0,343.2 740.2,346.7 C735.3,350.1 729.8,354.0 724.5,357.4 C719.3,360.8 711.2,365.5 708.5,367.2Z" fill="url(#gArmR)" stroke="#0b0e10" stroke-width="1.30"/>
<path d="M610.5,337.9 C607.8,337.2 600.4,336.2 594.5,334.0 C588.5,331.7 581.4,327.6 574.9,324.2 C568.4,320.8 561.6,315.6 555.4,313.4 C549.2,311.3 540.7,311.8 537.8,311.5" fill="none" stroke="#0b0e10" stroke-width="1.17"/>
<path d="M708.5,337.9 C711.2,337.2 718.6,336.2 724.5,334.0 C730.5,331.7 737.6,327.6 744.1,324.2 C750.6,320.8 757.4,315.6 763.6,313.4 C769.8,311.3 778.3,311.8 781.2,311.5" fill="none" stroke="#0b0e10" stroke-width="1.17"/>
<path d="M610.5,363.3 C608.5,362.3 602.7,360.2 598.4,357.4 C594.1,354.6 589.6,350.4 584.7,346.7 C579.8,342.9 573.6,337.9 569.1,334.9 C564.5,332.0 561.3,329.9 557.3,329.1 C553.4,328.3 549.0,329.3 545.6,330.0 C542.2,330.8 538.3,332.8 536.8,333.4" fill="none" stroke="#0b0e10" stroke-width="1.17"/>
<path d="M708.5,363.3 C710.5,362.3 716.3,360.2 720.6,357.4 C724.9,354.6 729.4,350.4 734.3,346.7 C739.2,342.9 745.4,337.9 749.9,334.9 C754.5,332.0 757.7,329.9 761.7,329.1 C765.6,328.3 770.0,329.3 773.4,330.0 C776.8,330.8 780.7,332.8 782.2,333.4" fill="none" stroke="#0b0e10" stroke-width="1.17"/>
<path d="M608.1,348.6 C605.9,347.8 599.3,346.2 594.5,343.7 C589.6,341.3 584.0,337.2 578.8,334.0 C573.6,330.7 568.1,326.6 563.2,324.2 C558.3,321.7 553.4,319.8 549.5,319.3 C545.6,318.8 541.4,320.9 539.8,321.3" fill="none" stroke="#bcc7d2" stroke-width="5" filter="url(#b2)" opacity="0.8"/>
<path d="M710.9,348.6 C713.1,347.8 719.7,346.2 724.5,343.7 C729.4,341.3 735.0,337.2 740.2,334.0 C745.4,330.7 750.9,326.6 755.8,324.2 C760.7,321.7 765.6,319.8 769.5,319.3 C773.4,318.8 777.6,320.9 779.2,321.3" fill="none" stroke="#d3dbe3" stroke-width="6" filter="url(#b2)" opacity="0.9"/>
<path d="M609.1,365.2 C606.7,363.6 599.5,358.9 594.5,355.4 C589.4,352.0 583.7,348.1 578.8,344.7 C574.0,341.3 569.4,337.5 565.2,335.3 C560.9,333.1 555.4,332.1 553.4,331.4" fill="none" stroke="#636c76" stroke-width="3" filter="url(#b2)"/>
<path d="M709.9,365.2 C712.3,363.6 719.5,358.9 724.5,355.4 C729.6,352.0 735.3,348.1 740.2,344.7 C745.0,341.3 749.6,337.5 753.8,335.3 C758.1,333.1 763.6,332.1 765.6,331.4" fill="none" stroke="#636c76" stroke-width="3" filter="url(#b2)"/>
<polygon points="610.5,334.0 616.5,329.1 621.8,323.2 626.7,322.2 696.0,322.2 701.9,326.1 703.9,332.0 708.7,334.0 708.7,366.2 703.9,368.1 698.0,375.0 694.1,377.5 626.7,377.5 621.8,375.0 616.5,370.1 610.5,367.2" fill="url(#gBlk)" stroke="#0b0e10" stroke-width="1.30"/>
<polyline points="616.5,329.1 616.5,370.1" fill="none" stroke="#0b0e10" stroke-width="1.17"/>
<polyline points="703.9,332.0 703.9,368.1" fill="none" stroke="#0b0e10" stroke-width="1.17"/>
<polyline points="616.5,336.9 631.6,338.4" fill="none" stroke="#0b0e10" stroke-width="1.17"/>
<polyline points="621.8,323.2 631.6,338.4" fill="none" stroke="#0b0e10" stroke-width="1.17"/>
<polyline points="616.5,366.2 633.5,361.3" fill="none" stroke="#0b0e10" stroke-width="1.17"/>
<polyline points="626.7,377.5 633.5,361.3" fill="none" stroke="#0b0e10" stroke-width="1.17"/>
<polyline points="696.0,322.2 686.3,338.8" fill="none" stroke="#0b0e10" stroke-width="1.17"/>
<polyline points="703.9,334.9 686.3,338.8" fill="none" stroke="#0b0e10" stroke-width="1.17"/>
<polyline points="694.1,377.5 685.3,360.3" fill="none" stroke="#0b0e10" stroke-width="1.17"/>
<polyline points="703.9,365.2 685.3,360.3" fill="none" stroke="#0b0e10" stroke-width="1.17"/>
<polygon points="627.7,378.9 692.1,378.9 685.3,385.7 636.5,385.7" fill="#8a95a2" stroke="#0b0e10" stroke-width="1.17"/>
<polygon points="638.4,379.5 687.8,379.5 684.3,385.3 638.4,385.3" fill="#3b4144"/>
<polygon points="636.5,385.7 685.3,385.7 686.3,398.0 632.6,398.0" fill="#9ba7b5"/>
<polyline points="637.1,385.3 684.7,385.3" fill="none" stroke="#0b0e10" stroke-width="1.17"/>
<polyline points="636.5,387.1 685.1,387.1" fill="none" stroke="#0b0e10" stroke-width="1.17"/>
<polyline points="635.2,391.6 686.0,391.6" fill="none" stroke="#0b0e10" stroke-width="1.17"/>
<polyline points="634.3,394.5 686.6,394.5" fill="none" stroke="#0b0e10" stroke-width="1.17"/>
<polyline points="633.9,395.7 686.8,395.7" fill="none" stroke="#0b0e10" stroke-width="1.17"/>
<polyline points="639.4,385.7 639.4,394.5" fill="none" stroke="#0b0e10" stroke-width="1.04"/>
<polyline points="680.0,385.7 680.0,394.5" fill="none" stroke="#0b0e10" stroke-width="1.04"/>
<clipPath id="cLP"><path d="M522.2,214.0 C522.6,209.5 524.4,203.0 526.9,198.8 C529.4,194.6 533.1,191.0 537.1,188.6 C541.1,186.2 545.8,185.1 550.6,184.4 C555.4,183.7 560.8,184.0 565.9,184.4 C571.0,184.8 576.3,185.4 581.1,186.9 C585.9,188.4 590.2,190.9 594.7,193.7 C599.2,196.5 604.2,200.2 608.2,203.9 C612.2,207.6 615.3,211.6 618.4,215.7 C621.5,219.8 623.5,224.4 626.9,228.4 C630.3,232.4 634.5,235.0 638.7,239.4 C642.9,243.8 648.3,249.6 652.3,254.7 C656.2,259.8 659.3,264.3 662.4,269.9 C665.5,275.5 668.8,283.5 670.9,288.5 C673.0,293.5 673.7,294.8 675.1,300.0 C676.5,305.2 677.5,311.9 679.2,319.7 C680.9,327.5 684.4,340.2 685.1,346.7 C685.8,353.2 685.3,354.9 683.6,358.7 C681.9,362.4 678.7,366.8 674.7,369.2 C670.7,371.6 664.5,373.2 659.7,373.0 C655.0,372.8 650.2,370.6 646.2,367.7 C642.2,364.8 637.9,359.2 635.7,355.7 C633.6,352.2 634.8,352.7 633.3,346.7 C631.8,340.7 629.2,327.5 626.7,319.7 C624.2,311.9 620.6,304.6 618.4,300.0 C616.2,295.4 615.6,295.2 613.3,291.9 C611.0,288.6 607.9,283.8 604.8,280.1 C601.7,276.4 598.4,272.9 594.7,269.9 C591.0,266.9 587.3,264.8 582.8,262.3 C578.3,259.8 572.4,257.0 567.6,254.7 C562.8,252.4 558.5,250.8 554.0,248.7 C549.5,246.6 544.5,244.4 540.5,242.0 C536.5,239.6 533.0,237.1 530.3,234.4 C527.6,231.7 525.8,229.3 524.4,225.9 C523.0,222.5 521.8,218.5 522.2,214.0Z" /></clipPath>
<g clip-path="url(#cLP)">
<path d="M522.2,214.0 C522.6,209.5 524.4,203.0 526.9,198.8 C529.4,194.6 533.1,191.0 537.1,188.6 C541.1,186.2 545.8,185.1 550.6,184.4 C555.4,183.7 560.8,184.0 565.9,184.4 C571.0,184.8 576.3,185.4 581.1,186.9 C585.9,188.4 590.2,190.9 594.7,193.7 C599.2,196.5 604.2,200.2 608.2,203.9 C612.2,207.6 615.3,211.6 618.4,215.7 C621.5,219.8 623.5,224.4 626.9,228.4 C630.3,232.4 634.5,235.0 638.7,239.4 C642.9,243.8 648.3,249.6 652.3,254.7 C656.2,259.8 659.3,264.3 662.4,269.9 C665.5,275.5 668.8,283.5 670.9,288.5 C673.0,293.5 673.7,294.8 675.1,300.0 C676.5,305.2 677.5,311.9 679.2,319.7 C680.9,327.5 684.4,340.2 685.1,346.7 C685.8,353.2 685.3,354.9 683.6,358.7 C681.9,362.4 678.7,366.8 674.7,369.2 C670.7,371.6 664.5,373.2 659.7,373.0 C655.0,372.8 650.2,370.6 646.2,367.7 C642.2,364.8 637.9,359.2 635.7,355.7 C633.6,352.2 634.8,352.7 633.3,346.7 C631.8,340.7 629.2,327.5 626.7,319.7 C624.2,311.9 620.6,304.6 618.4,300.0 C616.2,295.4 615.6,295.2 613.3,291.9 C611.0,288.6 607.9,283.8 604.8,280.1 C601.7,276.4 598.4,272.9 594.7,269.9 C591.0,266.9 587.3,264.8 582.8,262.3 C578.3,259.8 572.4,257.0 567.6,254.7 C562.8,252.4 558.5,250.8 554.0,248.7 C549.5,246.6 544.5,244.4 540.5,242.0 C536.5,239.6 533.0,237.1 530.3,234.4 C527.6,231.7 525.8,229.3 524.4,225.9 C523.0,222.5 521.8,218.5 522.2,214.0Z" fill="#939eac"/>
<path d="M547.0,213.0 C551.2,214.8 563.2,219.8 572.0,224.0 C580.8,228.2 591.7,232.3 600.0,238.0 C608.3,243.7 615.3,250.3 622.0,258.0 C628.7,265.7 635.0,274.5 640.0,284.0 C645.0,293.5 648.8,304.8 652.0,315.0 C655.2,325.2 657.8,340.0 659.0,345.0" fill="none" stroke="#a8b4c2" stroke-width="28" filter="url(#b5)"/>
<ellipse cx="660" cy="362" rx="22" ry="12" fill="#7a8591" filter="url(#b5)" opacity="0.8"/>
<path d="M664.0,280.0 C665.7,284.2 671.3,296.7 674.0,305.0 C676.7,313.3 678.5,321.7 680.0,330.0 C681.5,338.3 682.5,350.8 683.0,355.0" fill="none" stroke="#6c7681" stroke-width="13" filter="url(#b5)" opacity="0.85"/>
<path d="M622.0,300.0 C623.3,305.0 627.0,320.3 630.0,330.0 C633.0,339.7 638.3,353.3 640.0,358.0" fill="none" stroke="#7a8591" stroke-width="7" filter="url(#b3)" opacity="0.7"/>
<ellipse cx="625" cy="265" rx="12" ry="3" transform="rotate(50 625 265)" fill="#ffffff" filter="url(#b2)"/>
<ellipse cx="625" cy="265" rx="7" ry="1.6" transform="rotate(50 625 265)" fill="#ffffff" filter="url(#b06)"/>
<path d="M522.2,214.0 C522.6,209.5 524.4,203.0 526.9,198.8 C529.4,194.6 533.1,191.0 537.1,188.6 C541.1,186.2 545.8,185.1 550.6,184.4 C555.4,183.7 560.8,184.0 565.9,184.4 C571.0,184.8 576.3,185.4 581.1,186.9 C585.9,188.4 590.2,190.9 594.7,193.7 C599.2,196.5 604.2,200.2 608.2,203.9 C612.2,207.6 615.3,211.6 618.4,215.7 C621.5,219.8 623.5,224.4 626.9,228.4 C630.3,232.4 634.5,235.0 638.7,239.4 C642.9,243.8 648.3,249.6 652.3,254.7 C656.2,259.8 659.3,264.3 662.4,269.9 C665.5,275.5 668.8,283.5 670.9,288.5 C673.0,293.5 673.7,294.8 675.1,300.0 C676.5,305.2 677.5,311.9 679.2,319.7 C680.9,327.5 684.4,340.2 685.1,346.7 C685.8,353.2 685.3,354.9 683.6,358.7 C681.9,362.4 678.7,366.8 674.7,369.2 C670.7,371.6 664.5,373.2 659.7,373.0 C655.0,372.8 650.2,370.6 646.2,367.7 C642.2,364.8 637.9,359.2 635.7,355.7 C633.6,352.2 634.8,352.7 633.3,346.7 C631.8,340.7 629.2,327.5 626.7,319.7 C624.2,311.9 620.6,304.6 618.4,300.0 C616.2,295.4 615.6,295.2 613.3,291.9 C611.0,288.6 607.9,283.8 604.8,280.1 C601.7,276.4 598.4,272.9 594.7,269.9 C591.0,266.9 587.3,264.8 582.8,262.3 C578.3,259.8 572.4,257.0 567.6,254.7 C562.8,252.4 558.5,250.8 554.0,248.7 C549.5,246.6 544.5,244.4 540.5,242.0 C536.5,239.6 533.0,237.1 530.3,234.4 C527.6,231.7 525.8,229.3 524.4,225.9 C523.0,222.5 521.8,218.5 522.2,214.0Z" fill="none" stroke="#757f8b" stroke-width="7" filter="url(#b3)"/>
<path d="M555.0,189.0 C558.8,190.8 570.5,195.7 577.7,199.6 C584.9,203.5 591.9,208.5 598.1,212.3 C604.3,216.1 610.0,219.5 615.0,222.5 C620.0,225.5 625.8,229.2 628.0,230.5 L628.0,228.0 C626.4,225.8 621.7,218.8 618.4,214.5 C615.1,210.2 612.2,206.2 608.2,202.5 C604.2,198.8 599.2,194.9 594.7,192.0 C590.2,189.1 585.9,186.7 581.1,185.0 C576.3,183.3 570.8,182.3 565.9,182.0 C561.0,181.7 554.3,182.8 552.0,183.0Z" fill="#626b75" filter="url(#b06)"/>
<path d="M555.0,189.0 C558.8,190.8 570.5,195.7 577.7,199.6 C584.9,203.5 591.9,208.5 598.1,212.3 C604.3,216.1 610.0,219.5 615.0,222.5 C620.0,225.5 625.8,229.2 628.0,230.5" fill="none" stroke="#7f8a96" stroke-width="5" filter="url(#b2)" transform="translate(-1.5,3.5)" opacity="0.55"/>
</g>
<defs>
<linearGradient id="gStripInL" gradientUnits="userSpaceOnUse" x1="503.9" y1="347.2" x2="519.5" y2="331.7">
<stop offset="0" stop-color="#a0acba"/><stop offset="0.5" stop-color="#8f9aa7"/><stop offset="1" stop-color="#77818d"/></linearGradient>
<linearGradient id="gStripInR" gradientUnits="userSpaceOnUse" x1="815.1" y1="347.2" x2="799.5" y2="331.7">
<stop offset="0" stop-color="#97a3b1"/><stop offset="0.18" stop-color="#c9d2db"/><stop offset="0.36" stop-color="#ffffff"/><stop offset="0.6" stop-color="#b5c0cc"/><stop offset="1" stop-color="#97a3b1"/></linearGradient>
<linearGradient id="gStripExL" gradientUnits="userSpaceOnUse" x1="417.7" y1="433.5" x2="433.2" y2="417.9">
<stop offset="0" stop-color="#7e8894"/><stop offset="0.5" stop-color="#8b96a3"/><stop offset="1" stop-color="#9ca8b6"/></linearGradient>
<linearGradient id="gStripExR" gradientUnits="userSpaceOnUse" x1="901.3" y1="433.5" x2="885.8" y2="417.9">
<stop offset="0" stop-color="#8b96a3"/><stop offset="0.3" stop-color="#6f7984"/><stop offset="0.65" stop-color="#8b96a3"/><stop offset="1" stop-color="#9ca8b6"/></linearGradient>
<linearGradient id="gFlInL" gradientUnits="userSpaceOnUse" x1="540.0" y1="346.5" x2="501.1" y2="307.6"><stop offset="0" stop-color="#6d7782"/><stop offset="0.4" stop-color="#9fabb9"/><stop offset="1" stop-color="#bcc6d1"/></linearGradient>
<linearGradient id="gFlInR" gradientUnits="userSpaceOnUse" x1="779.0" y1="346.5" x2="817.9" y2="307.6"><stop offset="0" stop-color="#5f6872"/><stop offset="0.35" stop-color="#8d98a5"/><stop offset="1" stop-color="#a9b5c3"/></linearGradient>
</defs>
<defs>
<linearGradient id="gExArmL" gradientUnits="userSpaceOnUse" x1="385" y1="428" x2="400" y2="468">
<stop offset="0" stop-color="#a4b0be"/><stop offset="0.45" stop-color="#9aa6b4"/><stop offset="1" stop-color="#69737d"/></linearGradient>
<linearGradient id="gExArmR" gradientUnits="userSpaceOnUse" x1="934" y1="428" x2="919" y2="468">
<stop offset="0" stop-color="#a4b0be"/><stop offset="0.4" stop-color="#d9e0e7"/><stop offset="0.7" stop-color="#9aa6b4"/><stop offset="1" stop-color="#717b86"/></linearGradient>
<linearGradient id="gExHoleL" x1="0" y1="0" x2="1" y2="1"><stop offset="0" stop-color="#596168"/><stop offset="0.5" stop-color="#99a5b3"/><stop offset="1" stop-color="#7b8591"/></linearGradient>
<linearGradient id="gExHoleR" x1="1" y1="0" x2="0" y2="1"><stop offset="0" stop-color="#596168"/><stop offset="0.5" stop-color="#a6b2c0"/><stop offset="1" stop-color="#8a95a2"/></linearGradient>
</defs>
<polygon points="368.8,438.4 387.7,432.6 392.9,430.6 395.5,425.4 398.1,426.0 419.0,450.1 416.4,450.8 403.3,454.7 377.3,464.1 374.7,452.1" fill="url(#gExArmL)" stroke="#0b0e10" stroke-width="1.17"/>
<polyline points="370.8,441.7 387.7,435.8 398.1,432.6" fill="none" stroke="#0b0e10" stroke-width="1.04"/>
<polyline points="377.3,456.6 402.0,449.5 413.8,445.6" fill="none" stroke="#0b0e10" stroke-width="1.04"/>
<polyline points="377.3,460.6 403.3,452.1 416.4,450.1" fill="none" stroke="#0b0e10" stroke-width="1.04"/>
<polyline points="390.3,435.2 398.1,449.5" fill="none" stroke="#0b0e10" stroke-width="1.04"/>
<polyline points="396.8,433.2 404.6,447.5" fill="none" stroke="#0b0e10" stroke-width="1.04"/>
<circle cx="351.9" cy="458.3" r="24.7" fill="#8e99a6" stroke="#0b0e10" stroke-width="1.30"/>
<circle cx="351.9" cy="458.3" r="23" fill="none" stroke="#c3ccd5" stroke-width="0.9" stroke-dasharray="5 2"/>
<circle cx="351.9" cy="458.3" r="21.5" fill="#8994a1" stroke="#0b0e10" stroke-width="1.17"/>
<circle cx="351.9" cy="458.3" r="17.3" fill="#7c8692" stroke="#21b6e6" stroke-width="1.1"/>
<circle cx="351.9" cy="458.3" r="14.2" fill="url(#gExHoleL)" stroke="#0b0e10" stroke-width="1.69"/>
<polyline points="338.2,452.1 346.0,446.9 360.4,443.6" fill="none" stroke="#0b0e10" stroke-width="1.69"/>
<polyline points="340.8,465.1 351.3,471.0 363.0,465.1 366.9,458.6" fill="none" stroke="#0b0e10" stroke-width="2.08"/>
<polygon points="339.5,450.8 348.0,445.6 359.1,443.6 363.0,445.6 350.0,448.4 340.8,454.7" fill="#5d666f" opacity="0.8"/>
<polyline points="351.9,435.2 351.9,442.3" fill="none" stroke="#0b0e10" stroke-width="1.04"/>
<polyline points="351.9,474.9 351.3,481.4" fill="none" stroke="#0b0e10" stroke-width="1.04"/>
<polyline points="329.1,456.0 335.4,457.3" fill="none" stroke="#0b0e10" stroke-width="1.04"/>
<polyline points="369.2,457.3 376.0,458.0" fill="none" stroke="#0b0e10" stroke-width="1.04"/>
<line x1="351.9" y1="458.3" x2="370.8" y2="452.1" stroke="#21b6e6" stroke-width="1"/>
<polygon points="950.2,438.4 931.3,432.6 926.1,430.6 923.5,425.4 920.9,426.0 900.0,450.1 902.6,450.8 915.7,454.7 941.7,464.1 944.3,452.1" fill="url(#gExArmR)" stroke="#0b0e10" stroke-width="1.17"/>
<polyline points="948.2,441.7 931.3,435.8 920.9,432.6" fill="none" stroke="#0b0e10" stroke-width="1.04"/>
<polyline points="941.7,456.6 917.0,449.5 905.2,445.6" fill="none" stroke="#0b0e10" stroke-width="1.04"/>
<polyline points="941.7,460.6 915.7,452.1 902.6,450.1" fill="none" stroke="#0b0e10" stroke-width="1.04"/>
<polyline points="928.7,435.2 920.9,449.5" fill="none" stroke="#0b0e10" stroke-width="1.04"/>
<polyline points="922.2,433.2 914.4,447.5" fill="none" stroke="#0b0e10" stroke-width="1.04"/>
<circle cx="967.1" cy="458.3" r="24.7" fill="#8e99a6" stroke="#0b0e10" stroke-width="1.30"/>
<circle cx="967.1" cy="458.3" r="23" fill="none" stroke="#c3ccd5" stroke-width="0.9" stroke-dasharray="5 2"/>
<circle cx="967.1" cy="458.3" r="21.5" fill="#8994a1" stroke="#0b0e10" stroke-width="1.17"/>
<circle cx="967.1" cy="458.3" r="17.3" fill="#7c8692" stroke="#21b6e6" stroke-width="1.1"/>
<circle cx="967.1" cy="458.3" r="14.2" fill="url(#gExHoleR)" stroke="#0b0e10" stroke-width="1.69"/>
<polyline points="980.8,452.1 973.0,446.9 958.6,443.6" fill="none" stroke="#0b0e10" stroke-width="1.69"/>
<polyline points="978.2,465.1 967.7,471.0 956.0,465.1 952.1,458.6" fill="none" stroke="#0b0e10" stroke-width="2.08"/>
<polygon points="979.5,450.8 971.0,445.6 959.9,443.6 956.0,445.6 969.0,448.4 978.2,454.7" fill="#5d666f" opacity="0.8"/>
<polyline points="967.1,435.2 967.1,442.3" fill="none" stroke="#0b0e10" stroke-width="1.04"/>
<polyline points="967.1,474.9 967.7,481.4" fill="none" stroke="#0b0e10" stroke-width="1.04"/>
<polyline points="989.9,456.0 983.6,457.3" fill="none" stroke="#0b0e10" stroke-width="1.04"/>
<polyline points="949.8,457.3 943.0,458.0" fill="none" stroke="#0b0e10" stroke-width="1.04"/>
<line x1="967.1" y1="458.3" x2="948.2" y2="452.1" stroke="#21b6e6" stroke-width="1"/>
<polygon points="522.7,366.0 483.4,326.7 498.6,310.8 538.2,350.4" fill="url(#gStripInL)" stroke="#0b0e10" stroke-width="1.17"/>
<polygon points="436.4,452.2 396.8,412.6 412.4,397.1 452.0,436.7" fill="url(#gStripExL)" stroke="#0b0e10" stroke-width="1.17"/>
<line x1="452.0" y1="436.7" x2="522.7" y2="366.0" stroke="#0b0e10" stroke-width="1.30"/>
<line x1="412.7" y1="397.4" x2="483.4" y2="326.7" stroke="#6e6a66" stroke-width="1"/>
<polygon points="537.2,349.3 498.6,310.8 504.6,304.8 541.8,341.9" fill="url(#gFlInL)" stroke="#0b0e10" stroke-width="1.17"/>
<line x1="511.0" y1="323.2" x2="517.0" y2="317.2" stroke="#0b0e10" stroke-width="1.17"/>
<line x1="518.1" y1="330.3" x2="524.1" y2="324.2" stroke="#0b0e10" stroke-width="1.17"/>
<polygon points="541.8,341.9 505.7,305.9 512.8,305.9 545.3,338.4" fill="#8e99a6" stroke="#0b0e10" stroke-width="1.17"/>
<polygon points="518.5,309.5 511.0,303.8 510.0,305.0 513.5,310.5" fill="#99a5b3" stroke="#0b0e10" stroke-width="1.17"/>
<line x1="537.5" y1="349.7" x2="498.3" y2="310.5" stroke="#1fb9ea" stroke-width="1.3"/>
<polygon points="511.4,321.4 503.6,313.6 507.8,309.4 515.6,317.2" fill="#ffffff" filter="url(#b2)"/>
<polygon points="430.6,458.7 391.0,419.1 397.2,413.0 436.8,452.6" fill="#a7b3c1" stroke="#0b0e10" stroke-width="1.04"/>
<line x1="425.7" y1="453.8" x2="431.8" y2="447.6" stroke="#0b0e10" stroke-width="1.04"/>
<line x1="396.7" y1="424.8" x2="402.8" y2="418.6" stroke="#0b0e10" stroke-width="1.04"/>
<line x1="428.6" y1="450.8" x2="399.6" y2="421.8" stroke="#0b0e10" stroke-width="0.78"/>
<polygon points="396.8,423.9 392.2,419.4 397.2,414.4 401.8,419.0" fill="#f4f7fa" filter="url(#b2)" opacity="0.95"/>
<line x1="431.1" y1="459.7" x2="390.1" y2="418.6" stroke="#1fb9ea" stroke-width="1.3"/>
<polygon points="796.3,366.0 835.6,326.7 820.4,310.8 780.8,350.4" fill="url(#gStripInR)" stroke="#0b0e10" stroke-width="1.17"/>
<polygon points="882.6,452.2 922.2,412.6 906.6,397.1 867.0,436.7" fill="url(#gStripExR)" stroke="#0b0e10" stroke-width="1.17"/>
<line x1="867.0" y1="436.7" x2="796.3" y2="366.0" stroke="#0b0e10" stroke-width="1.30"/>
<line x1="906.3" y1="397.4" x2="835.6" y2="326.7" stroke="#6e6a66" stroke-width="1"/>
<polygon points="781.8,349.3 820.4,310.8 814.4,304.8 777.2,341.9" fill="url(#gFlInR)" stroke="#0b0e10" stroke-width="1.17"/>
<line x1="808.0" y1="323.2" x2="802.0" y2="317.2" stroke="#0b0e10" stroke-width="1.17"/>
<line x1="800.9" y1="330.3" x2="794.9" y2="324.2" stroke="#0b0e10" stroke-width="1.17"/>
<polygon points="777.2,341.9 813.3,305.9 806.2,305.9 773.7,338.4" fill="#8e99a6" stroke="#0b0e10" stroke-width="1.17"/>
<polygon points="800.5,309.5 808.0,303.8 809.0,305.0 805.5,310.5" fill="#99a5b3" stroke="#0b0e10" stroke-width="1.17"/>
<line x1="781.5" y1="349.7" x2="820.7" y2="310.5" stroke="#1fb9ea" stroke-width="1.3"/>
<polygon points="888.4,458.7 928.0,419.1 921.8,413.0 882.2,452.6" fill="#a7b3c1" stroke="#0b0e10" stroke-width="1.04"/>
<line x1="893.3" y1="453.8" x2="887.2" y2="447.6" stroke="#0b0e10" stroke-width="1.04"/>
<line x1="922.3" y1="424.8" x2="916.2" y2="418.6" stroke="#0b0e10" stroke-width="1.04"/>
<line x1="890.4" y1="450.8" x2="919.4" y2="421.8" stroke="#0b0e10" stroke-width="0.78"/>
<line x1="887.9" y1="459.7" x2="928.9" y2="418.6" stroke="#1fb9ea" stroke-width="1.3"/>
<path d="M594.5,409.2 Q595.4,419.9 616.0,419.9 L701.9,419.9 Q722.4,419.9 723.4,409.2" fill="none" stroke="#867f78" stroke-width="0.8"/>
<polyline points="626.7,420.3 626.7,438.5" fill="none" stroke="#867f78" stroke-width="0.8" opacity="1"/>
<polyline points="658.9,420.3 658.9,438.5" fill="none" stroke="#867f78" stroke-width="0.8" opacity="1"/>
<polyline points="692.1,420.3 692.1,438.5" fill="none" stroke="#867f78" stroke-width="0.8" opacity="1"/>
<polyline points="626.7,420.3 616.0,430.7 596.4,430.7" fill="none" stroke="#867f78" stroke-width="0.8" opacity="1"/>
<polyline points="692.1,420.3 702.9,430.7 722.4,430.7" fill="none" stroke="#867f78" stroke-width="0.8" opacity="1"/>
<polyline points="594.5,409.2 586.7,417.0" fill="none" stroke="#867f78" stroke-width="0.8" opacity="1"/>
<polyline points="723.4,409.2 731.2,417.0" fill="none" stroke="#867f78" stroke-width="0.8" opacity="1"/>
<polyline points="626.2,421.1 626.2,442.2 691.8,442.2 691.8,421.1" fill="none" stroke="#867f78" stroke-width="0.8" opacity="1"/>
<polyline points="659.0,421.1 659.0,517.2" fill="none" stroke="#867f78" stroke-width="0.8" opacity="1"/>
<polyline points="595.8,409.4 595.8,421.1 626.2,421.1" fill="none" stroke="#867f78" stroke-width="0.8" opacity="1"/>
<polyline points="724.6,409.4 724.6,421.1 691.8,421.1" fill="none" stroke="#867f78" stroke-width="0.8" opacity="1"/>
<polyline points="626.2,430.5 612.2,442.2 584.1,442.2" fill="none" stroke="#867f78" stroke-width="0.8" opacity="1"/>
<polyline points="691.8,430.5 705.9,442.2 720.0,442.2" fill="none" stroke="#867f78" stroke-width="0.8" opacity="1"/>
<polyline points="570.0,517.2 649.7,437.5 668.4,437.5 720.0,489.0" fill="none" stroke="#867f78" stroke-width="0.8" opacity="1"/>
<polyline points="531.2,357.5 618.5,444.8" fill="none" stroke="#867f78" stroke-width="0.8" opacity="0.9"/>
<polyline points="534.0,354.7 600.1,420.8" fill="none" stroke="#867f78" stroke-width="0.8" opacity="0.7"/>
<polyline points="446.3,442.3 532.2,528.2" fill="none" stroke="#8a9094" stroke-width="0.8" opacity="1"/>
<polyline points="443.5,445.2 470.7,472.4" fill="none" stroke="#70787c" stroke-width="0.8" opacity="1"/>
<polyline points="440.7,448.0 462.9,470.3" fill="none" stroke="#8a9094" stroke-width="0.8" opacity="1"/>
<polyline points="436.4,452.2 513.8,529.7" fill="none" stroke="#9aa0a4" stroke-width="0.8" opacity="1"/>
<polyline points="447.4,361.4 409.9,323.9" fill="none" stroke="#6d7478" stroke-width="0.8" opacity="1"/>
<polyline points="461.5,347.2 424.0,309.7" fill="none" stroke="#5d6468" stroke-width="0.8" opacity="1"/>
<polyline points="379.5,392.5 477.8,294.2" fill="none" stroke="#5d6468" stroke-width="0.8" opacity="1"/>
<polyline points="456.6,442.7 441.7,457.5" fill="none" stroke="#70787c" stroke-width="0.8" opacity="1"/>
<polyline points="459.4,445.5 444.5,460.4" fill="none" stroke="#70787c" stroke-width="0.8" opacity="1"/>
<polyline points="462.2,448.3 447.4,463.2" fill="none" stroke="#70787c" stroke-width="0.8" opacity="1"/>
<polyline points="465.0,451.2 450.2,466.0" fill="none" stroke="#70787c" stroke-width="0.8" opacity="1"/>
<polyline points="787.8,357.5 700.5,444.8" fill="none" stroke="#867f78" stroke-width="0.8" opacity="0.9"/>
<polyline points="785.0,354.7 718.9,420.8" fill="none" stroke="#867f78" stroke-width="0.8" opacity="0.7"/>
<polyline points="872.7,442.3 786.8,528.2" fill="none" stroke="#8a9094" stroke-width="0.8" opacity="1"/>
<polyline points="875.5,445.2 848.3,472.4" fill="none" stroke="#70787c" stroke-width="0.8" opacity="1"/>
<polyline points="878.3,448.0 856.1,470.3" fill="none" stroke="#8a9094" stroke-width="0.8" opacity="1"/>
<polyline points="882.6,452.2 805.2,529.7" fill="none" stroke="#9aa0a4" stroke-width="0.8" opacity="1"/>
<polyline points="871.6,361.4 909.1,323.9" fill="none" stroke="#6d7478" stroke-width="0.8" opacity="1"/>
<polyline points="857.5,347.2 895.0,309.7" fill="none" stroke="#5d6468" stroke-width="0.8" opacity="1"/>
<polyline points="939.5,392.5 841.2,294.2" fill="none" stroke="#5d6468" stroke-width="0.8" opacity="1"/>
<polyline points="862.4,442.7 877.3,457.5" fill="none" stroke="#70787c" stroke-width="0.8" opacity="1"/>
<polyline points="859.6,445.5 874.5,460.4" fill="none" stroke="#70787c" stroke-width="0.8" opacity="1"/>
<polyline points="856.8,448.3 871.6,463.2" fill="none" stroke="#70787c" stroke-width="0.8" opacity="1"/>
<polyline points="854.0,451.2 868.8,466.0" fill="none" stroke="#70787c" stroke-width="0.8" opacity="1"/>
<polyline points="617.1,531.1 487.7,401.7" fill="none" stroke="#867f78" stroke-width="0.8" opacity="0.8"/>
<polyline points="701.9,531.1 831.3,401.7" fill="none" stroke="#867f78" stroke-width="0.8" opacity="0.8"/>
<polyline points="511.7,500.7 588.1,424.3" fill="none" stroke="#867f78" stroke-width="0.8" opacity="0.6"/>
<polygon points="867.7,437.4 799.9,369.5 798.4,370.9 862.4,442.7" fill="#5a6168"/>
<polygon points="846.9,417.2 814.4,384.7 812.4,386.6 845.0,419.1" fill="#0e1113"/>
<polygon points="473.5,415.8 504.6,384.7 506.4,386.5 475.3,417.6" fill="#0e1113"/>
<line x1="655.5" y1="449.7" x2="655.5" y2="430.0" stroke="#24e04a" stroke-width="1.3"/>
<line x1="655.5" y1="449.7" x2="635.0" y2="449.7" stroke="#f03a3a" stroke-width="1.3"/>
<circle cx="655.5" cy="427.8" r="3.1" fill="#2df050"/>
<circle cx="632.8" cy="449.7" r="3.1" fill="#f23c3c"/>
<circle cx="655.7" cy="449.7" r="1.5" fill="#35e0e8"/>
</svg>
<div id="tb"></div>
<div class="sel" style="left:741px"></div><div class="sel" style="left:767px"></div>
<svg id="icons" style="position:absolute;left:0;top:0" width="1366" height="90" viewBox="0 0 1366 90">
<defs>
<linearGradient id="lens" x1="0" y1="0" x2="0" y2="1"><stop offset="0" stop-color="#ffffff"/><stop offset="1" stop-color="#cfeaf6"/></linearGradient>
<linearGradient id="rep" x1="0" y1="0" x2="1" y2="1"><stop offset="0" stop-color="#bfe3f1"/><stop offset="1" stop-color="#4f9fc0"/></linearGradient>
<linearGradient id="rb1" x1="0" y1="1" x2="0.4" y2="0"><stop offset="0" stop-color="#ff3b30"/><stop offset="0.5" stop-color="#ff9d00"/><stop offset="1" stop-color="#f7f000"/></linearGradient>
<linearGradient id="rb2" x1="0" y1="0" x2="0.4" y2="1"><stop offset="0" stop-color="#b6f000"/><stop offset="0.5" stop-color="#2fe08a"/><stop offset="1" stop-color="#22c6e8"/></linearGradient>
<linearGradient id="rb3" x1="0" y1="0" x2="1" y2="0"><stop offset="0" stop-color="#ff2d55"/><stop offset="0.6" stop-color="#e22bd0"/><stop offset="1" stop-color="#8a3cf0"/></linearGradient>
<linearGradient id="gry" x1="0" y1="0" x2="1" y2="0"><stop offset="0" stop-color="#c2c2c2"/><stop offset="0.5" stop-color="#dedede"/><stop offset="1" stop-color="#cfcfcf"/></linearGradient>
</defs>
<!-- 1 refit -->
<rect x="507.5" y="55.5" width="14" height="14" fill="#fff" stroke="#b4b4b4" stroke-width="1"/>
<line x1="517.6" y1="65.6" x2="522.2" y2="70.2" stroke="#8d8d8d" stroke-width="3.2"/>
<line x1="518" y1="66" x2="521.8" y2="69.8" stroke="#f2f2f2" stroke-width="1.6"/>
<circle cx="514.6" cy="62.6" r="4.3" fill="url(#lens)" stroke="#2f88aa" stroke-width="1.1"/>
<!-- 2 zoom in -->
<line x1="543.2" y1="65.2" x2="548" y2="70" stroke="#8d8d8d" stroke-width="3.2"/>
<line x1="543.6" y1="65.6" x2="547.6" y2="69.6" stroke="#f2f2f2" stroke-width="1.6"/>
<circle cx="539.1" cy="61" r="5.6" fill="url(#lens)" stroke="#2f88aa" stroke-width="1.1"/>
<path d="M536,61H542.2M539.1,57.9V64.1" stroke="#0b5f86" stroke-width="1.9" fill="none"/>
<!-- 3 zoom out -->
<line x1="569.2" y1="65.2" x2="574" y2="70" stroke="#8d8d8d" stroke-width="3.2"/>
<line x1="569.6" y1="65.6" x2="573.6" y2="69.6" stroke="#f2f2f2" stroke-width="1.6"/>
<circle cx="565" cy="61" r="5.6" fill="url(#lens)" stroke="#2f88aa" stroke-width="1.1"/>
<path d="M562,61H568" stroke="#0b5f86" stroke-width="1.9" fill="none"/>
<!-- 4 repaint -->
<rect x="586" y="56" width="14.6" height="14.4" fill="url(#rep)" stroke="#a9a9a9" stroke-width="1"/>
<path d="M586.5,60 C592,58 597,59.5 599,63 L590,70 L586.5,70Z" fill="#fff"/>
<line x1="589" y1="69.5" x2="598" y2="62.2" stroke="#0c4f78" stroke-width="1.5"/>
<!-- 5 display style cube -->
<polygon points="611.2,59.1 615.1,55.2 627,55.2 623,59.1" fill="#c8ecf8"/>
<polygon points="623,59.1 627,55.2 627,66.6 623,70.5" fill="#6fb0d0"/>
<rect x="611.2" y="59.1" width="11.8" height="11.4" fill="#fff"/>
<path d="M611.2,59.1H623V70.5H611.2ZM611.2,59.1L615.1,55.2H627L623,59.1M627,55.2V66.6L623,70.5" fill="none" stroke="#0d5f88" stroke-width="1.2" stroke-linejoin="round"/>
<polygon points="627,72.5 629.8,72.5 629.8,70" fill="#555"/>
<!-- 6 saved views -->
<polygon points="638,61.8 641.6,55.5 650.3,55.5 653.8,61.8 653.8,69.3 641.6,69.3" fill="#d7f1fa" stroke="#49a6cf" stroke-width="1"/>
<polygon points="650.3,55.5 653.8,61.8 653.8,64 647.2,64 647.2,61.8" fill="#6bb3d4" stroke="#2b8fc0" stroke-width="0.8"/>
<path d="M638,61.8H647.2V69.3" fill="none" stroke="#49a6cf" stroke-width="0.9"/>
<path d="M638,61.8L641.6,55.5H650.3" fill="#effafd" stroke="#49a6cf" stroke-width="0.9"/>
<rect x="648.4" y="64.3" width="5.4" height="6.2" fill="#fff" stroke="#9a9a9a" stroke-width="0.8"/>
<path d="M650,66.4H652.4M650,68.4H652.4" stroke="#555" stroke-width="0.9"/>
<polygon points="654.2,72.5 657,72.5 657,70" fill="#555"/>
<!-- 7 view manager -->
<rect x="665.5" y="55.6" width="13" height="13.6" fill="#fff" stroke="#a8a8a8" stroke-width="1"/>
<path d="M665.5,58H678.5M665.5,61.8H678.5M665.5,65.4H678.5M669.4,58V69.2" stroke="#a8a8a8" stroke-width="0.9" fill="none"/>
<rect x="665.5" y="67.6" width="5" height="1.4" fill="#9fd3ea"/>
<rect x="670.6" y="64.4" width="10.2" height="6.4" rx="1" fill="#3a3a3a"/>
<rect x="674" y="63" width="3.4" height="2" fill="#3a3a3a"/>
<circle cx="675.7" cy="67.6" r="2.3" fill="#8e8e8e" stroke="#1a1a1a" stroke-width="0.8"/>
<!-- 8 perspective -->
<polygon points="691,60 695.4,55.2 706.8,55.2 706.8,63.8 702.4,70.5 693,67.8" fill="#bfe2f0" stroke="#6eb5d3" stroke-width="1"/>
<polygon points="694.6,61.2 703,58.6 702.2,68.6 695.4,66.2" fill="#e6f5fb" stroke="#6eb5d3" stroke-width="0.8"/>
<path d="M691,60L694.6,61.2M706.8,55.2L703,58.6M702.4,70.5L702.2,68.6M693,67.8L695.4,66.2" stroke="#6eb5d3" stroke-width="0.8"/>
<!-- 9 datum display -->
<path d="M717.3,55.7L721.6,59.7M721.6,55.7L717.3,59.7" stroke="#8a6a1f" stroke-width="1.3"/>
<path d="M727,55.4L725.2,58.8M723.8,61.6L722,65M721,67.2L719.6,70.6" stroke="#8a6a1f" stroke-width="1.4"/>
<path d="M727.8,62V67H732.6M727.8,67L725,69.6" stroke="#7a5a14" stroke-width="1.1" fill="none"/>
<path d="M726.6,63.2L727.8,61.2L729,63.2ZM731.6,65.8L733.4,67L731.6,68.2ZM724.4,68.4L724.4,70.2L726.2,70Z" fill="#7a5a14"/>
<polygon points="733,72.5 735.8,72.5 735.8,70" fill="#555"/>
<!-- 10 annotation display -->
<rect x="744.4" y="55.6" width="9" height="5.4" fill="#fff8e1" stroke="#b9b9b9" stroke-width="0.8"/>
<path d="M754,58.3H759.6V63.4" stroke="#333" stroke-width="1.1" fill="none"/>
<path d="M759.6,63.6L756,63.9L758.4,61.3Z" fill="#333"/>
<path d="M751,68.5C753,65.6 758,65.6 760,68.5C758,71.4 753,71.4 751,68.5Z" fill="#333"/>
<circle cx="755.5" cy="68.5" r="1.5" fill="#fff"/><circle cx="755.5" cy="68.5" r="0.7" fill="#333"/>
<!-- 11 spin center -->
<path d="M773.5,58.1L778.4,63.4L773.5,68.4M778.4,63.4H783.5" stroke="#3a3a3a" stroke-width="0.9" fill="none"/>
<circle cx="773.5" cy="58.1" r="2.4" fill="#7fb77e" stroke="#5c9a5b" stroke-width="0.5"/>
<circle cx="783.5" cy="63.4" r="2.4" fill="#e88a86" stroke="#c9605c" stroke-width="0.5"/>
<circle cx="773.5" cy="68.4" r="2.4" fill="#3f93bd" stroke="#2b7aa3" stroke-width="0.5"/>
<!-- 12 appearance/render -->
<path d="M803.7,55.9L797,67.8H810.2Z" fill="none" stroke="#17426b" stroke-width="3.6" stroke-linejoin="round"/>
<path d="M797.4,67.4L803.7,56.2" stroke="url(#rb1)" stroke-width="2.2" stroke-linecap="round"/>
<path d="M803.7,56.2L810,67.4" stroke="url(#rb2)" stroke-width="2.2" stroke-linecap="round"/>
<path d="M797.4,67.6H808" stroke="url(#rb3)" stroke-width="2.2" stroke-linecap="round"/>
<circle cx="808.4" cy="67.4" r="3.7" fill="#f0353d"/>
<path d="M807,65.2L811,67.4L807,69.6Z" fill="#fff"/>
<!-- 13 pause -->
<rect x="823.9" y="56.9" width="4" height="10.9" fill="#9d9d9d"/>
<rect x="831" y="56.9" width="4" height="10.9" fill="#9d9d9d"/>
<!-- 14 -->
<path d="M848,57.2H863.8V67.8H850C853.4,66.6 854.4,64.4 854,62.4C853.6,60.4 851.4,59 848,58.6Z" fill="url(#gry)"/>
</svg>
</div></body></html>
